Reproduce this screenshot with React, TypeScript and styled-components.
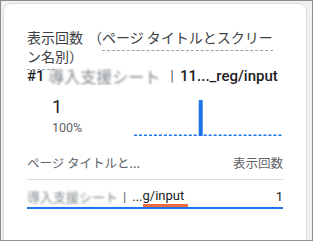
import React from "react";
import styled, { createGlobalStyle } from "styled-components";

const GlobalStyle = createGlobalStyle`
  html, body {
    margin: 0;
    padding: 0;
    background: #ffffff;
  }
  * {
    box-sizing: border-box;
  }
`;

const Frame = styled.div`
  width: 313px;
  height: 241px;
  border: 1px solid #8c8c8c;
  background: #f1f1f1;
  padding: 2px 5px 0 2px;
  overflow: hidden;
`;

const Card = styled.div`
  height: 260px;
  background: #ffffff;
  border: 1px solid #dadce0;
  border-radius: 8px;
  padding: 24px 23px 0 23px;
  font-family: Roboto, "Noto Sans CJK JP", sans-serif;
  display: flex;
  flex-direction: column;
`;

const Title = styled.div`
  font-family: "Noto Sans CJK JP", sans-serif;
  font-size: 14px;
  line-height: 19px;
  color: #3c4043;
`;

const Paren = styled.span`
  margin-left: 5px;
`;

const Dotted = styled.span`
  border-bottom: 1px dashed #9aa0a6;
  padding-bottom: 3px;
`;

const RankRow = styled.div`
  display: flex;
  align-items: center;
  height: 19px;
  font-size: 15px;
  font-weight: 500;
  color: #202124;
  white-space: nowrap;
  overflow: hidden;
`;

const Blurred = styled.span<{ $size: number }>`
  font-family: "Noto Sans CJK JP", sans-serif;
  font-size: ${(p) => p.$size}px;
  font-weight: 400;
  color: #80868b;
  filter: blur(1.3px);
`;

const Sep = styled.span`
  color: #5f6368;
  font-weight: 400;
  margin: 0 6px 0 10px;
`;

const MetricRow = styled.div`
  display: flex;
  margin-top: 11px;
`;

const MetricCol = styled.div`
  width: 107px;
  padding-left: 25px;
  display: flex;
  flex-direction: column;
`;

const BigValue = styled.div`
  font-size: 18px;
  line-height: 22px;
  color: #202124;
`;

const Percent = styled.div`
  margin-top: 2px;
  font-size: 12.5px;
  line-height: 15px;
  color: #5f6368;
`;

const Spark = styled.svg`
  margin-top: 4px;
  display: block;
`;

const TableHead = styled.div`
  margin-top: 18px;
  display: flex;
  justify-content: space-between;
  font-family: "Noto Sans CJK JP", sans-serif;
  font-size: 12.5px;
  line-height: 16px;
  color: #5f6368;
  padding-bottom: 8px;
  border-bottom: 1px solid #dadce0;
`;

const TableRow = styled.div`
  display: flex;
  justify-content: space-between;
  align-items: center;
  height: 29px;
  padding-top: 6px;
  line-height: 17px;
  font-size: 13px;
  color: #202124;
  border-bottom: 2px solid #1a73e8;
`;

const RowLabel = styled.div`
  display: flex;
  align-items: center;
  white-space: nowrap;
`;

const RowSep = styled.span`
  color: #5f6368;
  margin: 0 6px 0 5px;
`;

const Marked = styled.span`
  border-bottom: 3px solid #ee6a40;
  padding-right: 4px;
`;

const Sparkline = () => (
  <Spark width="150" height="37" viewBox="0 0 150 37">
    <line
      x1="0"
      y1="35.25"
      x2="150"
      y2="35.25"
      stroke="#1a73e8"
      strokeWidth="1.5"
      strokeDasharray="3 2"
    />
    <rect x="65" y="0" width="4" height="36" fill="#1a73e8" />
  </Spark>
);

export default function App() {
  return (
    <>
      <GlobalStyle />
      <Frame>
        <Card>
          <Title>
            表示回数<Paren>（</Paren>
            <Dotted>ページ タイトルとスクリーン名</Dotted>別）
          </Title>
          <RankRow>
            #1&nbsp;
            <Blurred $size={16}>導入支援シート</Blurred>
            <Sep>|</Sep>
            11..._reg/input
          </RankRow>
          <MetricRow>
            <MetricCol>
              <BigValue>1</BigValue>
              <Percent>100%</Percent>
            </MetricCol>
            <Sparkline />
          </MetricRow>
          <TableHead>
            <span>ページ タイトルと...</span>
            <span>表示回数</span>
          </TableHead>
          <TableRow>
            <RowLabel>
              <Blurred $size={13}>導入支援シート</Blurred>
              <RowSep>|</RowSep>
              ...<Marked>g/input</Marked>
            </RowLabel>
            <span>1</span>
          </TableRow>
        </Card>
      </Frame>
    </>
  );
}
